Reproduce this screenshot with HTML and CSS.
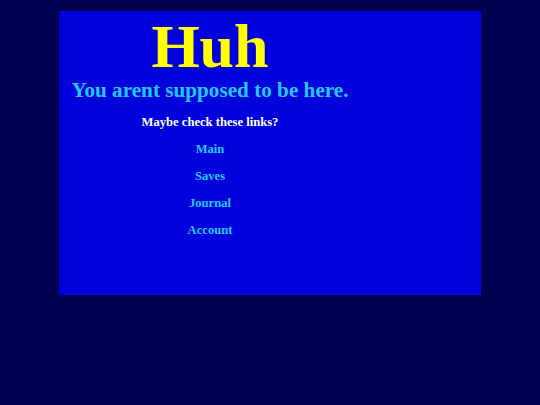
FILE: index.html
```html
<!DOCTYPE html>
<html>
<head>
<meta charset="utf-8">
<title>Huh</title>
<link rel="stylesheet" href="styles.css">
</head>
<body>
<div class="panel">
  <div class="column">
    <h1 class="title">Huh</h1>
    <h2 class="subtitle">You arent supposed to be here.</h2>
    <p class="prompt">Maybe check these links?</p>
    <ul class="links">
      <li><a href="#">Main</a></li>
      <li><a href="#">Saves</a></li>
      <li><a href="#">Journal</a></li>
      <li><a href="#">Account</a></li>
    </ul>
  </div>
</div>
</body>
</html>
```

FILE: styles.css
```css
html, body {
  margin: 0;
  padding: 0;
  background: #000050;
  font-family: "Liberation Serif", "Times New Roman", serif;
  font-weight: bold;
}

.panel {
  margin: 11px 0 0 59px;
  width: 422px;
  height: 284px;
  background: #0000dc;
  padding-top: 4px;
  box-sizing: border-box;
}

.column {
  width: 302px;
  text-align: center;
}

.title {
  margin: 0;
  font-size: 62px;
  line-height: 62px;
  color: #ffff00;
}

.subtitle {
  margin: 2px 0 0;
  font-size: 21.2px;
  line-height: 22px;
  color: #1ecbff;
}

.prompt {
  margin: 15px 0 0;
  font-size: 12.6px;
  line-height: 13px;
  color: #ffffff;
}

.links {
  list-style: none;
  margin: 7px 0 0;
  padding: 0;
}

.links li {
  font-size: 12.6px;
  line-height: 27px;
}

.links a {
  color: #1ecbff;
  text-decoration: none;
}
```
